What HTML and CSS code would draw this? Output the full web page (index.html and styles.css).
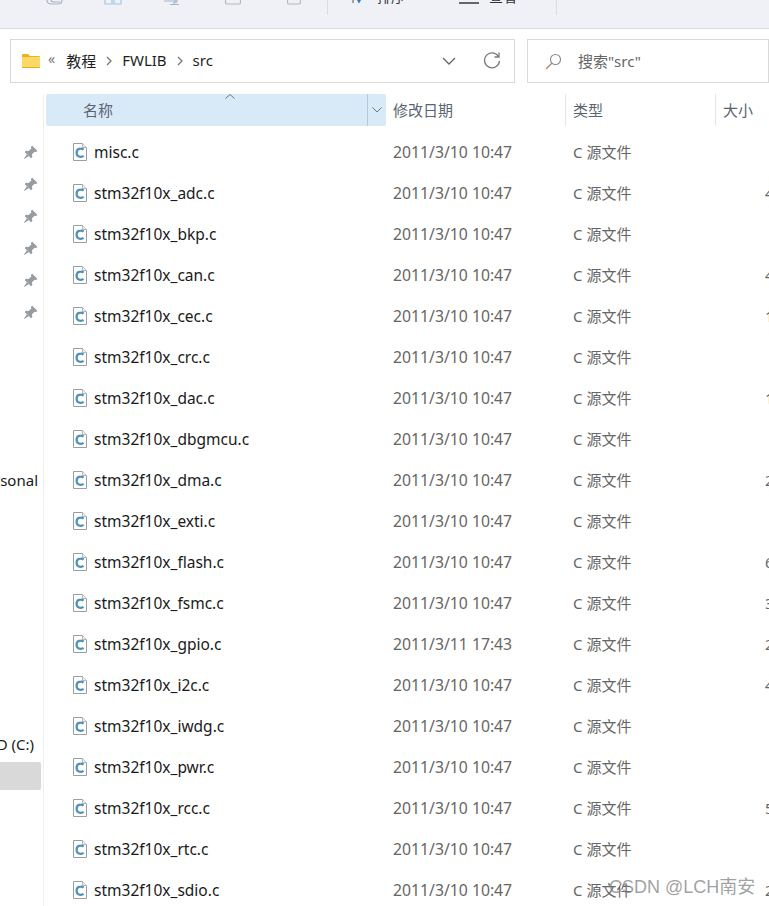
FILE: index.html
```html
<!DOCTYPE html>
<html lang="zh-CN">
<head>
<meta charset="utf-8">
<title>src</title>
<link rel="stylesheet" href="styles.css">
</head>
<body>
<svg class="defs" width="0" height="0" aria-hidden="true">
  <symbol id="cfile" viewBox="0 0 14 18">
    <path d="M.5.5H9.500L13.500 4.500V17.500H.5Z" fill="#fff" stroke="#9a9ea3"/>
    <path d="M9.500.5V4.500H13.500" fill="#eef0f2" stroke="#b5b8bb"/>
    <path d="M10.600 6.700A4 4 0 0 0 7.800 5.700C5.200 5.700 3.600 7.400 3.600 9.800S5.200 13.800 7.700 13.800A4.200 4.200 0 0 0 10.600 12.900" fill="none" stroke="#4d93b8" stroke-width="2.300"/>
  </symbol>
  <symbol id="pin" viewBox="0 0 15 15">
    <path d="M9 .5 14.500 6 13 7 11.600 6.700 9 9.300 9.300 12 8 13.300 1.700 7 3 5.700 5.700 6 8.300 3.400 8 2ZM4 9 .5 14.500 6 11Z" fill="#969ca3"/>
  </symbol>
</svg>

<header class="ribbon">
  <svg class="tool t1" width="18" height="5" viewBox="0 0 18 5"><path d="M1 0C1 3 3 4 6 4H12C15 4 16 2 16 0M5 0C5 1.500 6 2 8 2H14" fill="none" stroke="#aab4c4" stroke-width="1.200"/></svg>
  <svg class="tool t2" width="18" height="5" viewBox="0 0 18 5"><path d="M1 0V4H8V0M10 0V4H17V0" fill="none" stroke="#a5c4e4" stroke-width="1.200"/></svg>
  <svg class="tool t3" width="20" height="5" viewBox="0 0 20 5"><path d="M0 1H14M10 2V4.500M6 4.500H15" fill="none" stroke="#a9b3c2" stroke-width="1.200"/><path d="M10 0H13V3H10Z" fill="#a5c4e4"/></svg>
  <svg class="tool t4" width="16" height="5" viewBox="0 0 16 5"><path d="M.5 0V2.500Q.5 4 2 4H14Q15.500 4 15.500 2.500V0" fill="none" stroke="#b4b7bd" stroke-width="1.200"/></svg>
  <svg class="tool t5" width="14" height="5" viewBox="0 0 14 5"><path d="M.5 0V2.500Q.5 4 2 4H12Q13.500 4 13.500 2.500V0" fill="none" stroke="#b4b7bd" stroke-width="1.200"/></svg>
  <span class="rule r1"></span>
  <svg class="tool t6" width="12" height="5" viewBox="0 0 12 5"><path d="M5 0H9L7 3.500Z" fill="#2b79c9"/><path d="M1 0V3" stroke="#555"/></svg>
  <span class="ribbon-text t7">排序</span>
  <span class="bar"></span>
  <span class="ribbon-text t8">查看</span>
  <span class="rule r2"></span>
</header>

<div class="nav">
  <div class="address">
    <svg class="folder" width="18" height="14" viewBox="0 0 18 14"><path d="M0 1Q0 0 1 0H6L8 2H17Q18 2 18 3V5H0Z" fill="#eeb120"/><path d="M0 3H18V13Q18 14 17 14H1Q0 14 0 13Z" fill="#fcd867"/><path d="M0 13H18V13.200Q18 14 17 14H1Q0 14 0 13.200Z" fill="#e8a91c"/></svg>
    <span class="chev-double">«</span>
    <span class="crumb c-first">教程</span>
    <svg class="sep" width="6" height="10" viewBox="0 0 6 10"><path d="M1 1 5 5 1 9" fill="none" stroke="#777" stroke-width="1.300"/></svg>
    <span class="crumb">FWLIB</span>
    <svg class="sep" width="6" height="10" viewBox="0 0 6 10"><path d="M1 1 5 5 1 9" fill="none" stroke="#777" stroke-width="1.300"/></svg>
    <span class="crumb">src</span>
    <span class="spacer"></span>
    <svg class="drop" width="14" height="8" viewBox="0 0 14 8"><path d="M1 1 7 7 13 1" fill="none" stroke="#666" stroke-width="1.300"/></svg>
    <svg class="refresh" width="18" height="18" viewBox="0 0 18 18"><path d="M15.500 4.500A7.500 7.500 0 1 0 16.500 9" fill="none" stroke="#777" stroke-width="1.300"/><path d="M16 .5V5H11.500" fill="none" stroke="#777" stroke-width="1.300"/></svg>
  </div>
  <div class="search">
    <svg class="lens" width="17" height="17" viewBox="0 0 17 17"><circle cx="10.500" cy="6.500" r="5" fill="none" stroke="#888" stroke-width="1.100"/><path d="M6.800 10.200 1 16" stroke="#a88c70" stroke-width="1.300"/></svg>
    <span class="search-text">搜索"src"</span>
  </div>
</div>

<main class="main">
  <aside class="side">
    <div class="pins">
      <svg class="pin" width="15" height="15"><use href="#pin"/></svg>
      <svg class="pin" width="15" height="15"><use href="#pin"/></svg>
      <svg class="pin" width="15" height="15"><use href="#pin"/></svg>
      <svg class="pin" width="15" height="15"><use href="#pin"/></svg>
      <svg class="pin" width="15" height="15"><use href="#pin"/></svg>
      <svg class="pin" width="15" height="15"><use href="#pin"/></svg>
    </div>
    <div class="side-item personal">OneDrive - Personal</div>
    <div class="side-item drive">本地磁盘 SSD (C:)</div>
    <div class="side-active"></div>
  </aside>
  <section class="list">
    <div class="head">
      <div class="hcell hname">名称
        <svg class="sort" width="10" height="5" viewBox="0 0 10 5"><path d="M.5 4.500 5 .5 9.500 4.500" fill="none" stroke="#777"/></svg>
        <span class="hdrop"><svg width="10" height="6" viewBox="0 0 10 6"><path d="M.5.5 5 5 9.500.5" fill="none" stroke="#777"/></svg></span>
      </div>
      <div class="hcell hdate">修改日期</div>
      <div class="hcell htype">类型</div>
      <div class="hcell hsize">大小</div>
    </div>
    <div class="rows">
    <div class="row"><svg class="ficon" width="14" height="18"><use href="#cfile"/></svg><span class="name">misc.c</span><span class="date">2011/3/10 10:47</span><span class="type">C 源文件</span><span class="size">9</span></div>
    <div class="row"><svg class="ficon" width="14" height="18"><use href="#cfile"/></svg><span class="name">stm32f10x_adc.c</span><span class="date">2011/3/10 10:47</span><span class="type">C 源文件</span><span class="size long">4</span></div>
    <div class="row"><svg class="ficon" width="14" height="18"><use href="#cfile"/></svg><span class="name">stm32f10x_bkp.c</span><span class="date">2011/3/10 10:47</span><span class="type">C 源文件</span><span class="size">9</span></div>
    <div class="row"><svg class="ficon" width="14" height="18"><use href="#cfile"/></svg><span class="name">stm32f10x_can.c</span><span class="date">2011/3/10 10:47</span><span class="type">C 源文件</span><span class="size long">4</span></div>
    <div class="row"><svg class="ficon" width="14" height="18"><use href="#cfile"/></svg><span class="name">stm32f10x_cec.c</span><span class="date">2011/3/10 10:47</span><span class="type">C 源文件</span><span class="size long">1</span></div>
    <div class="row"><svg class="ficon" width="14" height="18"><use href="#cfile"/></svg><span class="name">stm32f10x_crc.c</span><span class="date">2011/3/10 10:47</span><span class="type">C 源文件</span><span class="size">4</span></div>
    <div class="row"><svg class="ficon" width="14" height="18"><use href="#cfile"/></svg><span class="name">stm32f10x_dac.c</span><span class="date">2011/3/10 10:47</span><span class="type">C 源文件</span><span class="size long">1</span></div>
    <div class="row"><svg class="ficon" width="14" height="18"><use href="#cfile"/></svg><span class="name">stm32f10x_dbgmcu.c</span><span class="date">2011/3/10 10:47</span><span class="type">C 源文件</span><span class="size">6</span></div>
    <div class="row"><svg class="ficon" width="14" height="18"><use href="#cfile"/></svg><span class="name">stm32f10x_dma.c</span><span class="date">2011/3/10 10:47</span><span class="type">C 源文件</span><span class="size long">2</span></div>
    <div class="row"><svg class="ficon" width="14" height="18"><use href="#cfile"/></svg><span class="name">stm32f10x_exti.c</span><span class="date">2011/3/10 10:47</span><span class="type">C 源文件</span><span class="size">7</span></div>
    <div class="row"><svg class="ficon" width="14" height="18"><use href="#cfile"/></svg><span class="name">stm32f10x_flash.c</span><span class="date">2011/3/10 10:47</span><span class="type">C 源文件</span><span class="size long">6</span></div>
    <div class="row"><svg class="ficon" width="14" height="18"><use href="#cfile"/></svg><span class="name">stm32f10x_fsmc.c</span><span class="date">2011/3/10 10:47</span><span class="type">C 源文件</span><span class="size long">3</span></div>
    <div class="row"><svg class="ficon" width="14" height="18"><use href="#cfile"/></svg><span class="name">stm32f10x_gpio.c</span><span class="date">2011/3/11 17:43</span><span class="type">C 源文件</span><span class="size long">2</span></div>
    <div class="row"><svg class="ficon" width="14" height="18"><use href="#cfile"/></svg><span class="name">stm32f10x_i2c.c</span><span class="date">2011/3/10 10:47</span><span class="type">C 源文件</span><span class="size long">4</span></div>
    <div class="row"><svg class="ficon" width="14" height="18"><use href="#cfile"/></svg><span class="name">stm32f10x_iwdg.c</span><span class="date">2011/3/10 10:47</span><span class="type">C 源文件</span><span class="size">5</span></div>
    <div class="row"><svg class="ficon" width="14" height="18"><use href="#cfile"/></svg><span class="name">stm32f10x_pwr.c</span><span class="date">2011/3/10 10:47</span><span class="type">C 源文件</span><span class="size">9</span></div>
    <div class="row"><svg class="ficon" width="14" height="18"><use href="#cfile"/></svg><span class="name">stm32f10x_rcc.c</span><span class="date">2011/3/10 10:47</span><span class="type">C 源文件</span><span class="size long">5</span></div>
    <div class="row"><svg class="ficon" width="14" height="18"><use href="#cfile"/></svg><span class="name">stm32f10x_rtc.c</span><span class="date">2011/3/10 10:47</span><span class="type">C 源文件</span><span class="size">8</span></div>
    <div class="row"><svg class="ficon" width="14" height="18"><use href="#cfile"/></svg><span class="name">stm32f10x_sdio.c</span><span class="date">2011/3/10 10:47</span><span class="type">C 源文件</span><span class="size long">2</span></div>
    </div>
  </section>
</main>
<div class="mark">CSDN @LCH南安</div>
</body>
</html>
```

FILE: styles.css
```css
* { box-sizing: border-box; }
html, body { margin: 0; height: 906px; overflow: hidden; background: #fff; }
body {
  position: relative;
  width: 769px;
  font-family: "Noto Sans", "Noto Sans CJK SC", sans-serif;
  font-size: 15px;
  color: #1a1a1a;
}
.defs { position: absolute; }

.ribbon {
  height: 29px;
  background: #f0f1f7;
  border-bottom: 1px solid #dcdcdf;
  display: flex;
  align-items: flex-start;
  overflow: hidden;
}
.tool { flex: none; }
.t1 { margin-left: 46px; }
.t2 { margin-left: 40px; }
.t3 { margin-left: 42px; }
.t4 { margin-left: 41px; }
.t5 { margin-left: 46px; }
.rule { flex: none; width: 1px; height: 15px; background: #dcdde2; }
.r1 { margin-left: 26px; }
.t6 { margin-left: 24px; }
.ribbon-text { flex: none; font-size: 14px; line-height: 14px; margin-top: -10px; color: #333; }
.t7 { margin-left: 13px; }
.bar { flex: none; width: 20px; height: 2px; margin: 2px 0 0 54px; background: #666; }
.t8 { margin-left: 10px; }
.r2 { margin-left: 39px; }

.nav { display: flex; gap: 12px; padding: 10px 0 0 10px; height: 65px; }
.address, .search {
  height: 44px;
  border: 1px solid #d9d9d9;
  display: flex;
  align-items: center;
  background: #fff;
}
.address { flex: none; width: 505px; padding-left: 11px; }
.folder { flex: none; }
.chev-double { margin-left: 8px; color: #777; font-size: 14px; line-height: 1; position: relative; top: -2px; }
.crumb { color: #1f1f1f; font-size: 15px; position: relative; top: -1px; }
.c-first { margin-left: 11px; }
.sep { margin: 0 10px; flex: none; }
.spacer { flex: 1; }
.drop { flex: none; margin-right: 27px; }
.refresh { flex: none; margin-right: 13px; }
.search { flex: 1; min-width: 0; padding-left: 17px; }
.lens { flex: none; }
.search-text { margin-left: 16px; color: #666; font-size: 15px; position: relative; top: -1px; }

.main { display: flex; height: 812px; }
.side {
  flex: none;
  width: 44px;
  border-right: 1px solid #f0f0f0;
  overflow: hidden;
  display: flex;
  flex-direction: column;
}
.pins { display: flex; flex-direction: column; gap: 17px; align-items: flex-end; padding: 51px 5px 0 0; }
.pin { flex: none; display: block; }
.side-item { flex: none; white-space: nowrap; display: flex; justify-content: flex-end; height: 22px; line-height: 22px; font-size: 15px; color: #1a1a1a; }
.personal { margin-top: 149px; padding-right: 5px; }
.drive { margin-top: 242px; padding-right: 9px; }
.side-active { flex: none; width: 41px; height: 28px; margin-top: 7px; background: #d9d9d9; border-radius: 0 2px 2px 0; }

.list { flex: 1; min-width: 0; overflow: hidden; padding-left: 2px; }
.head { display: flex; height: 32px; font-size: 15px; color: #5a6472; }
.hcell { flex: none; display: flex; align-items: center; position: relative; padding-bottom: 2px; }
.hname { width: 340px; padding-left: 37px; background: #d8e9f8; border-radius: 2px; }
.sort { position: absolute; left: 179px; top: 0; }
.hdrop { position: absolute; right: 0; top: 0; bottom: 0; width: 19px; border-left: 1px solid #b5c7d8; display: flex; align-items: center; justify-content: center; }
.hdate { width: 179px; padding-left: 7px; }
.htype { width: 150px; padding-left: 7px; border-left: 1px solid #e5e5e5; }
.hsize { width: 60px; padding-left: 7px; border-left: 1px solid #e5e5e5; }

.rows { padding-top: 5px; }
.row { display: flex; align-items: center; height: 41px; white-space: nowrap; }
.ficon { flex: none; margin-left: 27px; }
.name { flex: none; width: 299px; margin-left: 7px; font-size: 15.500px; color: #1a1a1a; }
.date { flex: none; width: 180px; font-size: 15.750px; color: #666; }
.type { flex: none; width: 192px; font-size: 15px; color: #666; }
.size { flex: none; font-size: 15px; color: #666; margin-left: 8px; }
.size.long { margin-left: 0; }

.mark {
  position: absolute;
  left: 609px;
  top: 876px;
  font-family: "Liberation Sans", "Noto Sans CJK SC", sans-serif;
  font-size: 18px;
  line-height: 22px;
  color: rgba(130, 130, 130, .75);
  white-space: nowrap;
}
```
